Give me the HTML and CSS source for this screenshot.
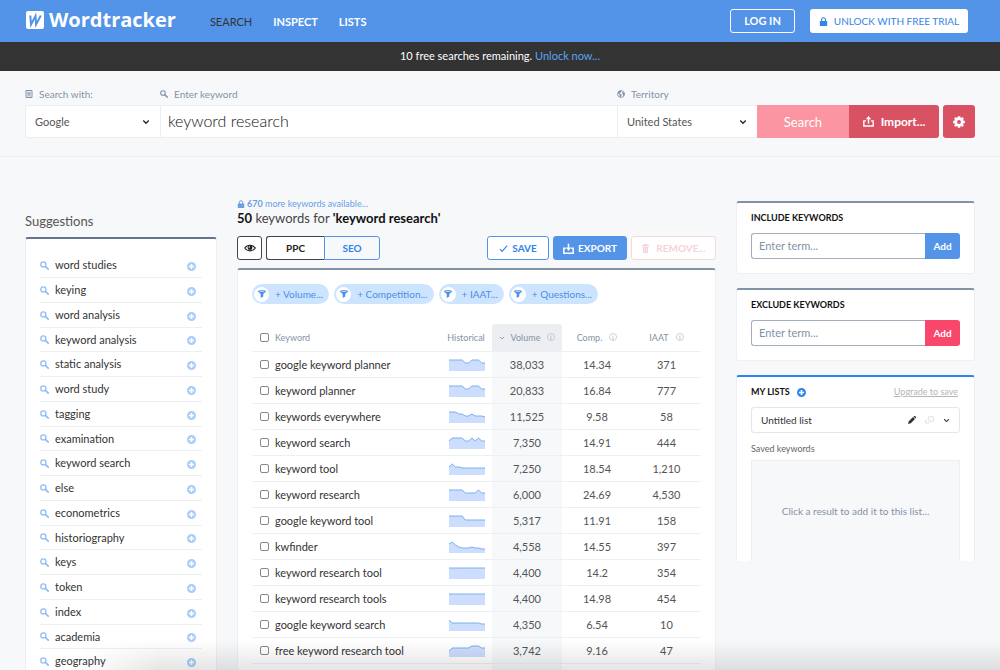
FILE: index.html
```
<!DOCTYPE html>
<html lang="en">
<head>
  <meta charset="UTF-8">
  <meta name="viewport" content="width=device-width, initial-scale=1.0">
  <title>Wordtracker</title>
  <link rel="stylesheet" href="styles.css">
</head>
<body>
  <!-- icons -->
  <svg class="sprite" width="0" height="0" aria-hidden="true">
    <symbol id="i-search" viewBox="0 0 16 16"><circle cx="6" cy="6" r="4.6" fill="none" stroke="currentColor" stroke-width="2.2"/><path d="M9.6 9.6l5 5" stroke="currentColor" stroke-width="3" stroke-linecap="round"/></symbol>
    <symbol id="i-plus" viewBox="0 0 16 16"><path fill="currentColor" fill-rule="evenodd" d="M8 0a8 8 0 100 16A8 8 0 008 0zM6.6 3.4h2.800v3.200h3.200v2.800H9.400v3.200H6.600V9.400H3.400V6.600h3.200z"/></symbol>
    <symbol id="i-lock" viewBox="0 0 16 16"><path d="M4.6 8V4.8a3.4 3.4 0 016.8 0V8" fill="none" stroke="currentColor" stroke-width="2"/><rect x="1.5" y="7" width="13" height="9" rx="1" fill="currentColor"/></symbol>
    <symbol id="i-list" viewBox="0 0 16 16"><path d="M2 1h12v14H2z" fill="none" stroke="currentColor" stroke-width="2"/><path d="M4.5 4.5h7M4.5 7h7M4.5 9.4h7M4.5 11.8h7" stroke="currentColor" stroke-width="1.5"/></symbol>
    <symbol id="i-globe" viewBox="0 0 16 16"><circle cx="8" cy="8" r="7" fill="none" stroke="currentColor" stroke-width="1.6"/><path fill="currentColor" d="M2 4l4-3 3 1-1 3-3 1 1 2 3 1v3l-2 3-2-3V9L2 7zM11 4l4 2v4l-2 3-1-4-2-2z"/></symbol>
    <symbol id="i-chev" viewBox="0 0 16 16"><path d="M2.500 5l5.500 5.500L13.500 5" fill="none" stroke="currentColor" stroke-width="2.500"/></symbol>
    <symbol id="i-upload" viewBox="0 0 16 16"><path d="M4.500 7H1.200v7.500h13.600V7h-3.300M8 11V3" fill="none" stroke="currentColor" stroke-width="2"/><path d="M8 0l3.800 4.600H4.200z" fill="currentColor"/></symbol>
    <symbol id="i-download" viewBox="0 0 16 16"><path d="M4 7.5H1.200v7.300h13.600V7.500H12M8 1v6" fill="none" stroke="currentColor" stroke-width="2.200"/><path d="M8 11.600L4.200 6.600h7.600z" fill="currentColor"/></symbol>
    <symbol id="i-gear" viewBox="0 0 16 16"><circle cx="8" cy="8" r="4.400" fill="none" stroke="currentColor" stroke-width="3.600"/><path d="M8 .2v3M8 12.800v3M.2 8h3M12.800 8h3M2.500 2.500l2 2M11.500 11.500l2 2M2.500 13.500l2-2M11.500 4.500l2-2" stroke="currentColor" stroke-width="3.400"/></symbol>
    <symbol id="i-eye" viewBox="0 0 16 16"><path d="M1 8c3.400-5 10.600-5 14 0-3.400 5-10.600 5-14 0z" fill="none" stroke="currentColor" stroke-width="1.500"/><circle cx="8" cy="7.600" r="3.200" fill="currentColor"/><circle cx="7" cy="6.600" r="1" fill="#fff"/></symbol>
    <symbol id="i-check" viewBox="0 0 16 16"><path d="M1.500 9l4 4 9-10" fill="none" stroke="currentColor" stroke-width="2"/></symbol>
    <symbol id="i-trash" viewBox="0 0 16 16"><path fill="currentColor" d="M5.500 0h5v1.500H14V4H2V1.500h3.500z"/><path d="M3 5h10l-.8 11H3.800z" fill="currentColor"/><path d="M6.200 7v7M9.800 7v7" stroke="#fff" stroke-width=".8"/></symbol>
    <symbol id="i-funnel" viewBox="0 0 16 16"><path fill="currentColor" d="M0 2.500C0 0 16 0 16 2.500c0 1.500-5.500 4.500-5.500 6V13l-5 3V8.500C5.500 7 0 4 0 2.500z"/><path d="M3.500 3h9" stroke="#fff" stroke-width="1.200"/></symbol>
    <symbol id="i-info" viewBox="0 0 16 16"><circle cx="8" cy="8" r="7.200" fill="none" stroke="currentColor" stroke-width="1.300"/><path d="M8 3.600v1.800M6.400 7H8v4.600M6 12h4" fill="none" stroke="currentColor" stroke-width="1.400"/></symbol>
    <symbol id="i-pencil" viewBox="0 0 16 16"><path fill="currentColor" d="M0 16l1.500-5.500L10 2l4 4-8.500 8.500zM11 1l1-1h2l2 2v2l-1 1z"/></symbol>
    <symbol id="i-copy" viewBox="0 0 16 16"><path d="M6 1.500h9v8H9V7H6zM4 7.500H1v5h6V10" fill="none" stroke="currentColor" stroke-width="1.500"/></symbol>
  </svg>

  <header class="topbar">
    <a class="logo" href="#">
      <svg width="18" height="18" viewBox="0 0 18 18" aria-hidden="true"><rect width="18" height="18" rx="2" fill="#fff"/><path d="M4.300 4.500l.7 9 4.500-8.500.6 8.500 4.700-9" fill="none" stroke="#5394e9" stroke-width="2"/></svg>
      <span>Wordtracker</span>
    </a>
    <nav class="nav">
      <a class="current" href="#">SEARCH</a>
      <a href="#">INSPECT</a>
      <a href="#">LISTS</a>
    </nav>
    <div class="account">
      <button class="login" type="button">LOG IN</button>
      <button class="unlock" type="button"><svg width="9" height="9"><use href="#i-lock"/></svg>UNLOCK WITH FREE TRIAL</button>
    </div>
  </header>

  <div class="notice">10 free searches remaining. <a href="#">Unlock now...</a></div>

  <form class="search">
    <div class="field engine">
      <label for="engine"><svg width="8" height="8"><use href="#i-list"/></svg>Search with:</label>
      <div class="select">
        <select id="engine"><option>Google</option></select>
        <svg class="chev" width="8" height="8"><use href="#i-chev"/></svg>
      </div>
    </div>
    <div class="field keyword">
      <label for="keyword"><svg width="8" height="8"><use href="#i-search"/></svg>Enter keyword</label>
      <input id="keyword" type="text" value="keyword research">
    </div>
    <div class="field territory">
      <label for="territory"><svg width="8" height="8"><use href="#i-globe"/></svg>Territory</label>
      <div class="select">
        <select id="territory"><option>United States</option></select>
        <svg class="chev" width="8" height="8"><use href="#i-chev"/></svg>
      </div>
    </div>
    <button class="go" type="button">Search</button>
    <button class="import" type="button"><svg width="11" height="11"><use href="#i-upload"/></svg>Import...</button>
    <button class="settings" type="button" aria-label="Settings"><svg width="12" height="12"><use href="#i-gear"/></svg></button>
  </form>

  <main class="columns">
    <section class="suggestions">
      <h2>Suggestions</h2>
      <ul class="card" id="suggestions"></ul>
    </section>

    <section class="results">
      <a class="more" href="#"><svg width="8" height="8"><use href="#i-lock"/></svg><span><b>670</b> more keywords available...</span></a>
      <h1><b>50</b> keywords for <b>'keyword research'</b></h1>
      <div class="toolbar">
        <button class="btn dark eye" type="button" aria-label="Columns"><svg width="12" height="12"><use href="#i-eye"/></svg></button>
        <div class="toggle">
          <button class="btn dark" type="button">PPC</button>
          <button class="btn seo" type="button">SEO</button>
        </div>
        <div class="actions">
          <button class="btn save" type="button"><svg width="9" height="9"><use href="#i-check"/></svg>SAVE</button>
          <button class="btn export" type="button"><svg width="11" height="11"><use href="#i-download"/></svg>EXPORT</button>
          <button class="btn remove" type="button"><svg width="9" height="9"><use href="#i-trash"/></svg>REMOVE...</button>
        </div>
      </div>
      <div class="card panel">
        <div class="filters">
          <button type="button"><span class="dot"><svg width="8" height="8"><use href="#i-funnel"/></svg></span>+ Volume...</button>
          <button type="button"><span class="dot"><svg width="8" height="8"><use href="#i-funnel"/></svg></span>+ Competition...</button>
          <button type="button"><span class="dot"><svg width="8" height="8"><use href="#i-funnel"/></svg></span>+ IAAT...</button>
          <button type="button"><span class="dot"><svg width="8" height="8"><use href="#i-funnel"/></svg></span>+ Questions...</button>
        </div>
        <table>
          <thead>
            <tr>
              <th class="pick"><label><input type="checkbox">Keyword</label></th>
              <th class="hist">Historical</th>
              <th class="vol"><svg class="sort" width="6" height="6"><use href="#i-chev"/></svg>Volume<svg class="info" width="8" height="8"><use href="#i-info"/></svg></th>
              <th class="comp">Comp.<svg class="info" width="8" height="8"><use href="#i-info"/></svg></th>
              <th class="iaat">IAAT<svg class="info" width="8" height="8"><use href="#i-info"/></svg></th>
            </tr>
          </thead>
          <tbody id="rows"></tbody>
        </table>
      </div>
    </section>

    <aside class="side">
      <form class="card box">
        <label class="title" for="include">INCLUDE KEYWORDS</label>
        <div class="add">
          <input id="include" type="text" placeholder="Enter term...">
          <button type="button">Add</button>
        </div>
      </form>
      <form class="card box exclude">
        <label class="title" for="exclude">EXCLUDE KEYWORDS</label>
        <div class="add">
          <input id="exclude" type="text" placeholder="Enter term...">
          <button type="button">Add</button>
        </div>
      </form>
      <section class="card box lists">
        <div class="lists-head">
          <h3 class="title">MY LISTS</h3>
          <button class="icon new" type="button" aria-label="New list"><svg width="9" height="9"><use href="#i-plus"/></svg></button>
          <a href="#">Upgrade to save</a>
        </div>
        <div class="list-pick">
          <span>Untitled list</span>
          <button class="icon" type="button" aria-label="Rename"><svg width="8" height="8"><use href="#i-pencil"/></svg></button>
          <button class="icon copy" type="button" aria-label="Copy"><svg width="9" height="9"><use href="#i-copy"/></svg></button>
          <button class="icon" type="button" aria-label="Open"><svg width="7" height="7"><use href="#i-chev"/></svg></button>
        </div>
        <p class="saved">Saved keywords</p>
        <div class="drop">Click a result to add it to this list...</div>
      </section>
    </aside>
  </main>
  <div class="fade"></div>

  <script>
    const suggestions = ['word studies', 'keying', 'word analysis', 'keyword analysis', 'static analysis',
      'word study', 'tagging', 'examination', 'keyword search', 'else', 'econometrics', 'historiography',
      'keys', 'token', 'index', 'academia', 'geography'];

    // keyword, volume, competition, IAAT, twelve monthly heights
    const results = [
      ['google keyword planner', '38,033', '14.34', '371', [11, 11, 11, 11, 11, 8, 8, 11, 11, 11, 8, 8]],
      ['keyword planner', '20,833', '16.84', '777', [11, 11, 11, 11, 11, 8, 8, 11, 11, 11, 8, 8]],
      ['keywords everywhere', '11,525', '9.58', '58', [11, 11, 11, 9, 9, 7, 7, 9, 7, 7, 7, 6]],
      ['keyword search', '7,350', '14.91', '444', [8, 11, 11, 11, 11, 8, 8, 11, 8, 11, 8, 8]],
      ['keyword tool', '7,250', '18.54', '1,210', [8, 11, 8, 8, 7, 7, 7, 7, 7, 7, 7, 7]],
      ['keyword research', '6,000', '24.69', '4,530', [11, 11, 11, 11, 11, 8, 8, 8, 8, 11, 8, 8]],
      ['google keyword tool', '5,317', '11.91', '158', [11, 11, 11, 11, 11, 7, 7, 7, 7, 7, 7, 7]],
      ['kwfinder', '4,558', '14.55', '397', [9, 11, 8, 6, 5, 5, 5, 6, 5, 5, 4, 4]],
      ['keyword research tool', '4,400', '14.2', '354', [11, 11, 11, 11, 11, 11, 11, 11, 11, 11, 11, 11]],
      ['keyword research tools', '4,400', '14.98', '454', [11, 11, 11, 11, 11, 11, 11, 11, 11, 11, 11, 11]],
      ['google keyword search', '4,350', '6.54', '10', [11, 8, 8, 8, 8, 8, 8, 8, 8, 8, 7, 7]],
      ['free keyword research tool', '3,742', '9.16', '47', [6, 9, 9, 9, 9, 9, 9, 11, 11, 11, 9, 9]],
      ['', '', '', '', null]
    ];

    function sparkline(values) {
      const points = values.map((v, i) => `${i * 36 / 11},${12 - v}`).join(' ');
      return `<svg width="36" height="12" viewBox="0 0 36 12">
        <polygon points="0,12 ${points} 36,12" fill="#cdddfd"/>
        <polyline points="${points}" fill="none" stroke="#7aaeee" stroke-width="1"/></svg>`;
    }

    document.getElementById('suggestions').innerHTML = suggestions.map(word => `
      <li><svg width="9" height="9"><use href="#i-search"/></svg><a href="#">${word}</a>
      <button class="icon" type="button" aria-label="Add ${word}"><svg width="9" height="9"><use href="#i-plus"/></svg></button></li>`).join('');

    document.getElementById('rows').innerHTML = results.map(([keyword, volume, comp, iaat, history]) => !history
      ? '<tr><td></td><td></td><td class="vol"></td><td></td><td></td></tr>' : `
      <tr>
        <td class="pick"><label><input type="checkbox">${keyword}</label></td>
        <td class="hist">${sparkline(history)}</td>
        <td class="vol">${volume}</td>
        <td>${comp}</td>
        <td>${iaat}</td>
      </tr>`).join('');
  </script>
</body>
</html>
```
FILE: styles.css
```
* {
  box-sizing: border-box;
}
body {
  margin: 0;
  height: 100vh;
  overflow: hidden;
  background: #f7f8fa;
  color: #333;
  font: 11px/16px Lato, "Open Sans", sans-serif;
}
button, input, select {
  font: inherit;
  color: inherit;
  margin: 0;
}
button {
  display: flex;
  align-items: center;
  justify-content: center;
  padding: 0;
  border: 0;
  cursor: pointer;
}
a {
  text-decoration: none;
}
h1, h2, h3, p, ul {
  margin: 0;
  padding: 0;
  font-weight: 400;
}
svg {
  display: block;
  flex: none;
}
.sprite {
  position: absolute;
}
.topbar {
  display: flex;
  align-items: center;
  height: 42px;
  padding: 0 32px 0 26px;
  background: #5394e9;
  color: #fff;
}
.topbar a {
  color: #fff;
}
.logo {
  display: flex;
  align-items: center;
  gap: 5px;
  margin-bottom: 2px;
  font: 700 20px/24px "Open Sans", sans-serif;
}
.nav {
  display: flex;
  gap: 21px;
  margin: 2px 0 0 34px;
  font-weight: 700;
}
.nav .current {
  color: #333;
  font-weight: 400;
}
.account {
  display: flex;
  gap: 15px;
  margin-left: auto;
}
.login, .unlock {
  height: 24px;
  border-radius: 3px;
}
.login {
  width: 65px;
  border: 1px solid #fff;
  background: none;
  font-weight: 700;
}
.unlock {
  width: 158px;
  gap: 6px;
  background: #fff;
  color: #3284ea;
  font-size: 10px;
}
.notice {
  height: 29px;
  background: #333;
  color: #fff;
  line-height: 28px;
  text-align: center;
}
.notice a {
  color: #5ba3f5;
}
.search {
  display: flex;
  align-items: flex-end;
  height: 86px;
  padding: 0 25px 18px;
  border-bottom: 1px solid #eceef1;
}
.field label {
  display: flex;
  align-items: center;
  gap: 6px;
  height: 16px;
  margin-bottom: 3px;
  color: #8492a6;
  font-size: 10px;
}
.field select, .field input {
  display: block;
  width: 100%;
  height: 33px;
  border: 1px solid #eceef1;
  border-right: 0;
  border-radius: 0;
  background: #fff;
  outline: 0;
}
.field select {
  appearance: none;
  padding: 0 9px;
  color: #555;
}
.field input {
  padding: 0 7px 2px;
  color: #111;
  font-size: 16px;
  font-weight: 300;
}
.engine {
  width: 135px;
}
.engine select {
  border-radius: 3px 0 0 3px;
}
.keyword {
  flex: 1;
}
.territory {
  width: 140px;
}
.select {
  position: relative;
}
.chev {
  position: absolute;
  right: 10px;
  top: 13px;
  color: #222;
  pointer-events: none;
}
.go, .import, .settings {
  height: 33px;
  background: #d95263;
  color: #fff;
  font-size: 13px;
}
.go {
  width: 92px;
  background: #fa95a1;
}
.import {
  width: 90px;
  gap: 7px;
  margin-right: 4px;
  border-radius: 0 3px 3px 0;
  font-size: 12px;
  font-weight: 700;
}
.settings {
  width: 32px;
  border-radius: 3px;
}
.columns {
  display: grid;
  grid-template-columns: 192fr 479fr 239fr;
  gap: 20px;
  padding: 0 25px;
}
.card {
  border: 1px solid #eef0f3;
  border-top: 2px solid #8492a6;
  border-radius: 3px;
  background: #fff;
}
.suggestions {
  padding-top: 54px;
}
.suggestions h2 {
  height: 26px;
  color: #555;
  font-size: 13px;
  line-height: 20px;
}
.suggestions .card {
  padding: 14px 14px 0;
  border-top-color: #64748f;
  list-style: none;
}
.suggestions li {
  display: flex;
  align-items: center;
  gap: 6px;
  height: 25px;
  border-bottom: 1px solid #eeeff1;
  color: #8fbdf8;
}
.suggestions li:nth-child(4n) {
  height: 24px;
}
.suggestions li a {
  flex: 1;
  color: #333;
}
.suggestions .icon {
  margin: 2px 6px 0 0;
  color: #a9cdfb;
}
.icon {
  background: none;
}
.results {
  padding-top: 40px;
}
.more {
  display: flex;
  align-items: center;
  gap: 2px;
  height: 13px;
  color: #6b9fe4;
  font-size: 9px;
}
.results h1 {
  height: 18px;
  font-size: 13px;
  line-height: 16px;
  color: #444;
}
.results h1 b {
  color: #111;
}
.toolbar {
  display: flex;
  gap: 4px;
  margin: 8px 0;
}
.btn {
  height: 24px;
  border: 1px solid #5394e9;
  border-radius: 3px;
  background: #fff;
  color: #2d84ee;
  font-size: 10px;
  font-weight: 700;
}
.dark {
  border-color: #444;
  color: #222;
}
.eye {
  width: 25px;
}
.toggle {
  display: flex;
}
.toggle .dark {
  width: 58px;
  border-right: 0;
  border-radius: 3px 0 0 3px;
}
.seo {
  width: 56px;
  border-radius: 0 3px 3px 0;
  background: #f7f8fa;
}
.actions {
  display: flex;
  gap: 4px;
  margin-left: auto;
}
.save {
  width: 62px;
  gap: 4px;
}
.export {
  width: 74px;
  gap: 4px;
  background: #5394e9;
  color: #fff;
}
.remove {
  width: 85px;
  gap: 6px;
  border-color: #f5d9dd;
  color: #f5d3d8;
}
.panel {
  padding: 14px 14px 0;
}
.filters {
  display: flex;
  gap: 5px;
  margin-bottom: 20px;
}
.filters button {
  gap: 6px;
  height: 20px;
  padding: 0 6px 0 2px;
  border-radius: 10px;
  background: #cde4ff;
  color: #4a8ee8;
  font-size: 10px;
}
.dot {
  display: flex;
  align-items: center;
  justify-content: center;
  width: 15px;
  height: 15px;
  border-radius: 50%;
  background: #fff;
}
table {
  width: 100%;
  border-collapse: separate;
  border-spacing: 0;
  table-layout: fixed;
}
th, td {
  height: 26px;
  padding: 0;
  border-bottom: 1px solid #eeeff1;
  text-align: center;
  color: #555;
}
th {
  height: 28px;
  color: #8492a6;
  font-size: 9px;
  font-weight: 400;
  white-space: nowrap;
}
th .sort, th .info {
  display: inline-block;
}
th .info {
  margin-left: 7px;
  color: #b4bcc8;
}
th .sort {
  margin-right: 6px;
}
.pick label {
  display: flex;
  align-items: center;
  gap: 6px;
  padding-left: 8px;
  white-space: nowrap;
}
td.pick {
  color: #333;
}
.pick input {
  appearance: none;
  width: 9px;
  height: 9px;
  border: 1px solid #888;
  border-radius: 2px;
  background: #fff;
}
.hist {
  width: 52px;
}
.hist svg {
  margin-left: 9px;
}
.vol, .comp {
  width: 70px;
}
.iaat {
  width: 69px;
}
td.vol {
  background: #f7f8fa;
}
th.vol {
  border-radius: 3px 3px 0 0;
  background: #eceef1;
}
.side {
  display: flex;
  flex-direction: column;
  gap: 14px;
  padding-top: 44px;
}
.box {
  height: 73px;
  padding: 7px 14px 0;
}
.title {
  display: block;
  height: 23px;
  color: #111;
  font-size: 9px;
  font-weight: 700;
}
.add {
  display: flex;
}
.add input {
  flex: 1;
  width: 0;
  height: 26px;
  padding: 0 7px 2px;
  border: 1px solid #a3aebd;
  border-right: 0;
  border-radius: 3px 0 0 3px;
}
.add input::placeholder {
  color: #8492a6;
}
.add button {
  width: 35px;
  border-radius: 0 3px 3px 0;
  background: #5394e9;
  color: #fff;
  font-size: 10px;
  font-weight: 700;
}
.exclude button {
  background: #f9476b;
}
.lists {
  height: 186px;
  border-top-color: #2d84ee;
  border-bottom: 0;
  border-radius: 3px 3px 0 0;
}
.lists-head {
  display: flex;
  gap: 7px;
}
.new {
  height: 16px;
  color: #3284ea;
}
.lists-head a {
  margin: 0 2px 0 auto;
  color: #b5b5b5;
  font-size: 9px;
  text-decoration: underline;
}
.list-pick {
  display: flex;
  align-items: center;
  gap: 9px;
  height: 26px;
  padding: 0 9px;
  border: 1px solid #e3e5e8;
  border-radius: 3px;
}
.list-pick span {
  flex: 1;
  font-size: 10px;
}
.list-pick .copy {
  color: #ddd;
}
.saved {
  margin: 8px 0 3px;
  color: #666;
  font-size: 9px;
}
.drop {
  height: 101px;
  border: 1px solid #eceef1;
  border-bottom: 0;
  background: #f7f8fa;
  color: #8492a6;
  font-size: 10px;
  line-height: 100px;
  text-align: center;
}
/* shadow along the bottom edge of the window */
.fade {
  position: fixed;
  left: 80px;
  right: 0;
  bottom: 0;
  height: 30px;
  background: linear-gradient(rgba(0, 0, 0, 0), rgba(0, 0, 0, 0.1));
  -webkit-mask-image: linear-gradient(90deg, transparent, #000 80px);
  mask-image: linear-gradient(90deg, transparent, #000 80px);
  pointer-events: none;
}
```
